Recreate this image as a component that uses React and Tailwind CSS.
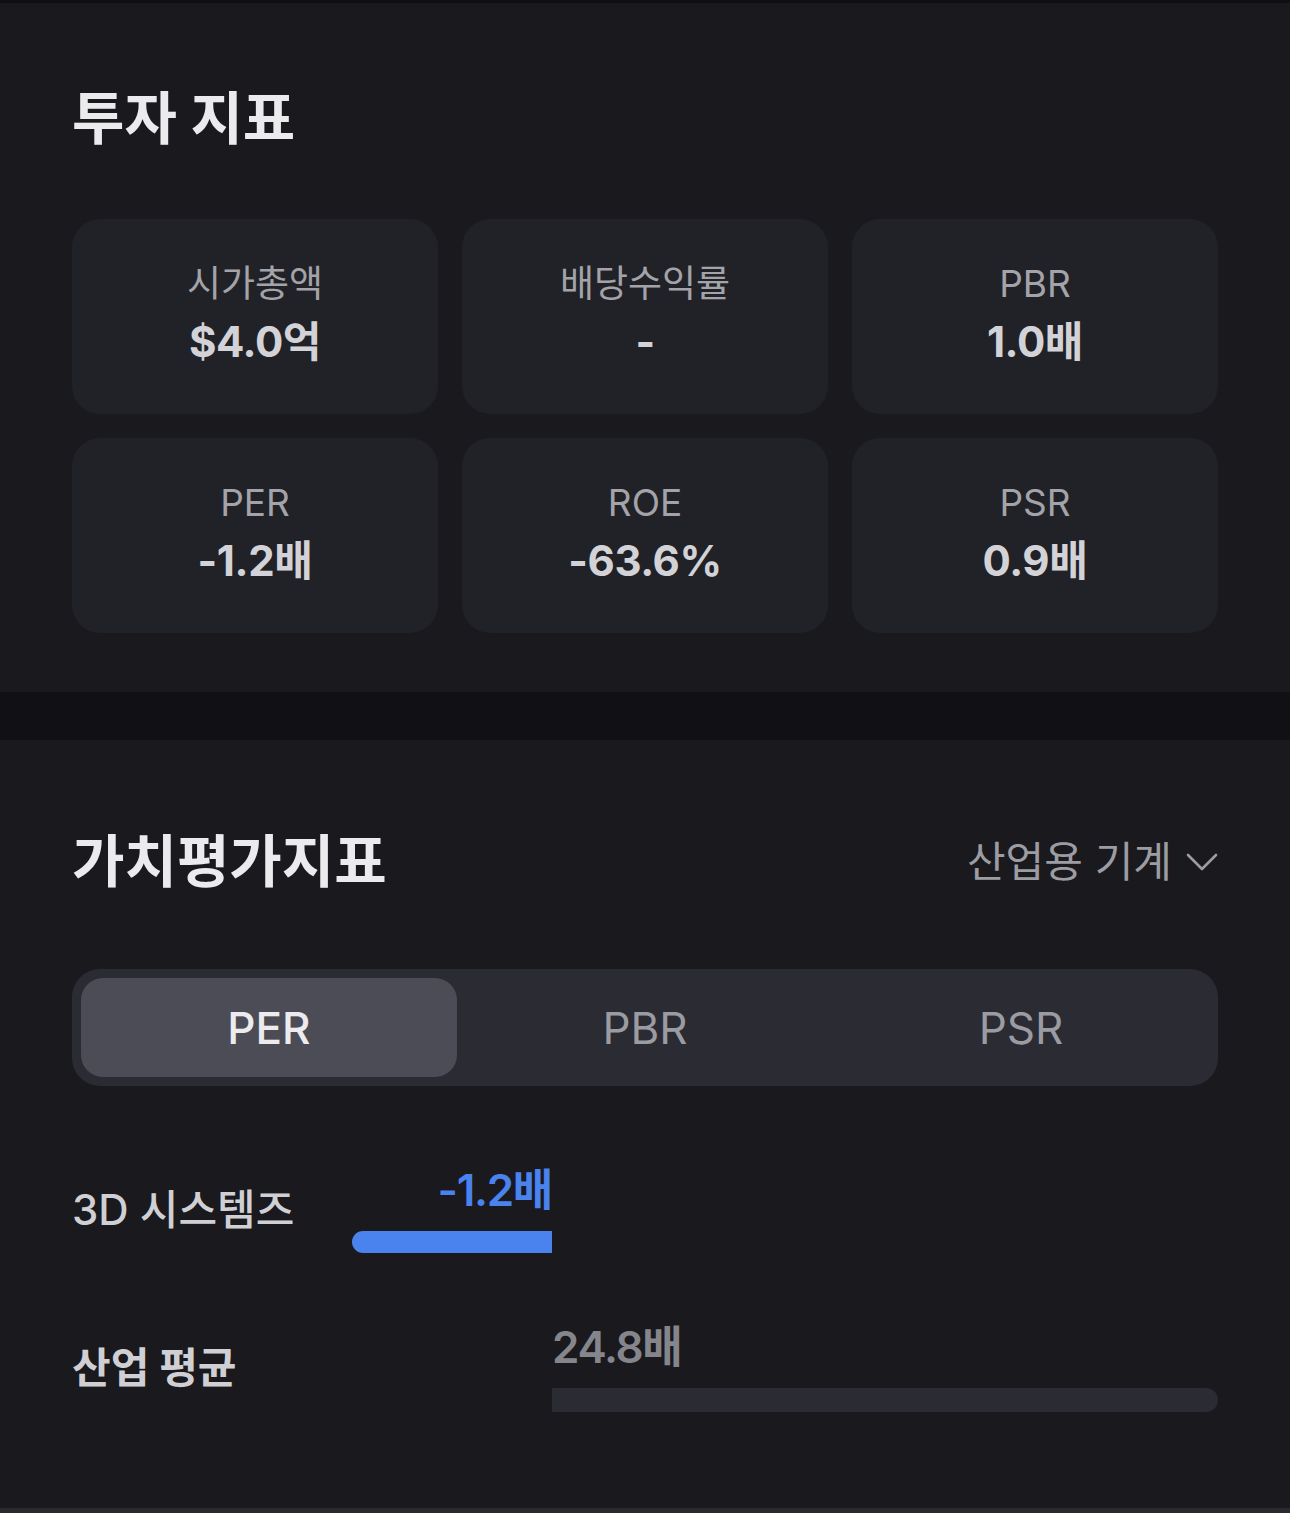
import React from "react";

const font = { fontFamily: "Inter, 'Noto Sans CJK KR', sans-serif" };

const cards = [
  { label: "시가총액", value: "$4.0억" },
  { label: "배당수익률", value: "-" },
  { label: "PBR", value: "1.0배" },
  { label: "PER", value: "-1.2배" },
  { label: "ROE", value: "-63.6%" },
  { label: "PSR", value: "0.9배" },
];

function Card({ label, value }) {
  return (
    <div className="h-[195px] rounded-[28px] bg-[#212227] flex flex-col items-center justify-center gap-[8px] pb-[6px]">
      <div className="text-[37px] leading-[48px] text-[#a3a3a9]">{label}</div>
      <div className="text-[42px] leading-[52px] font-bold tracking-[-0.01em] text-[#d3d3d7]">{value}</div>
    </div>
  );
}

export default function App() {
  return (
    <div className="w-[1290px] min-h-[1513px] bg-[#19191e] flex flex-col" style={font}>
      <div className="h-[3px] bg-[#0f0f12]" />
      <section className="px-[72px] pt-[82px] pb-[59px]">
        <h1 className="text-[57px] leading-[68px] font-bold text-[#ebebed]">투자 지표</h1>
        <div className="mt-[66px] grid grid-cols-3 gap-[24px]">
          {cards.map((c) => (
            <Card key={c.label} {...c} />
          ))}
        </div>
      </section>
      <div className="h-[48px] bg-[#111115]" />
      <section className="px-[72px] pt-[88px] pb-[96px]">
        <div className="flex items-center justify-between">
          <h2 className="text-[57px] leading-[68px] font-bold text-[#ebebed]">가치평가지표</h2>
          <div className="flex items-center gap-[14px] text-[#9c9ca3]">
            <span className="text-[42px] leading-[52px]">산업용 기계</span>
            <svg width="32" height="20" viewBox="0 0 32 20" fill="none">
              <polyline points="2,3 16,17 30,3" stroke="#9c9ca3" strokeWidth="2.6" strokeLinecap="round" strokeLinejoin="round" />
            </svg>
          </div>
        </div>

        <div className="mt-[73px] h-[117px] rounded-[28px] bg-[#2b2b33] p-[9px] grid grid-cols-3">
          <div className="rounded-[22px] bg-[#4c4c56] flex items-center justify-center text-[44px] font-medium text-[#ececee]">PER</div>
          <div className="flex items-center justify-center text-[44px] text-[#9b9ba2]">PBR</div>
          <div className="flex items-center justify-center text-[44px] text-[#9b9ba2]">PSR</div>
        </div>

        <div className="mt-[80px] flex items-center">
          <div className="w-[280px] text-[42px] leading-[48px] font-medium text-[#d0d0d4]">3D 시스템즈</div>
          <div className="flex-1 flex flex-col">
            <div className="w-[200px] flex flex-col items-end">
              <div className="text-[44px] leading-[48px] font-semibold tracking-[-0.03em] text-[#4a82ee]">-1.2배</div>
              <div className="mt-[17px] h-[22px] w-[200px] rounded-l-full bg-[#4a82ee]" />
            </div>
          </div>
        </div>

        <div className="mt-[70px] flex items-center">
          <div className="w-[280px] text-[42px] leading-[48px] font-bold text-[#d0d0d4]">산업 평균</div>
          <div className="flex-1 flex flex-col pl-[200px]">
            <div className="text-[44px] leading-[48px] font-semibold tracking-[-0.03em] text-[#85858c]">24.8배</div>
            <div className="mt-[17px] h-[24px] w-full rounded-r-full bg-[#2b2b33]" />
          </div>
        </div>
      </section>
      <div className="mt-auto h-[5px] bg-[#2a2a2e]" />
    </div>
  );
}
